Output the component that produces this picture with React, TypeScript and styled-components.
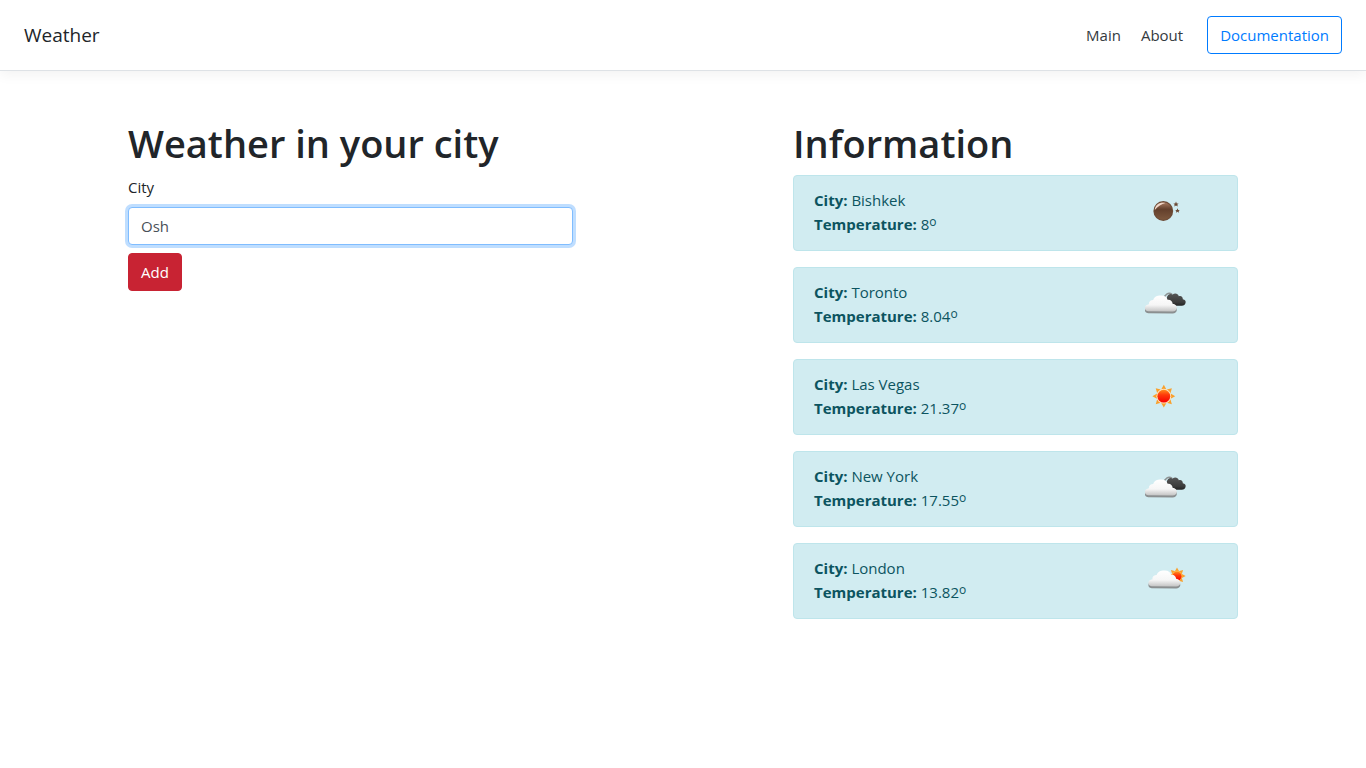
import React, { useState } from 'react';
import styled, { createGlobalStyle } from 'styled-components';

const GlobalStyle = createGlobalStyle`
  *, *::before, *::after { box-sizing: border-box; }
  body {
    margin: 0;
    background: #fff;
    color: #212529;
    font-family: "Segoe UI", "Open Sans", "Noto Sans", sans-serif;
    font-size: 15px;
    font-weight: 400;
    line-height: 24px;
  }
`;

const Header = styled.header`
  display: flex;
  align-items: center;
  padding: 16px 24px;
  margin-bottom: 48px;
  background: #fff;
  border-bottom: 1px solid #dee2e6;
  box-shadow: 0 4px 12px rgba(0, 0, 0, 0.05);
`;

const Brand = styled.span`
  margin-right: auto;
  font-size: 19px;
`;

const Nav = styled.nav`
  display: flex;
  gap: 20px;
  margin-right: 24px;
`;

const NavLink = styled.a`
  color: #343a40;
  text-decoration: none;
`;

const OutlineLink = styled.a`
  padding: 6px 12px;
  border: 1px solid #007bff;
  border-radius: 4px;
  color: #007bff;
  text-decoration: none;
`;

const Container = styled.main`
  display: flex;
  justify-content: space-between;
  max-width: 1140px;
  margin: 0 auto;
`;

const Column = styled.section`
  flex: 0 0 41.6667%;
  padding: 0 15px;
`;

const Title = styled.h1`
  margin: 0 0 8px;
  font-size: 38px;
  font-weight: 600;
  line-height: 48px;
  white-space: nowrap;
`;

const Label = styled.label`
  display: block;
  margin-bottom: 8px;
`;

const Input = styled.input`
  display: block;
  width: 100%;
  height: 38px;
  margin-bottom: 8px;
  padding: 6px 12px;
  border: 1px solid #80bdff;
  border-radius: 4px;
  outline: 0;
  box-shadow: 0 0 0 3px rgba(0, 123, 255, 0.25);
  background: #fff;
  color: #495057;
  font: inherit;
`;

const SubmitButton = styled.button`
  padding: 6px 12px;
  border: 1px solid #c82333;
  border-radius: 4px;
  background: #c82333;
  color: #fff;
  font: inherit;
`;

const Card = styled.article`
  display: flex;
  justify-content: space-between;
  margin-bottom: 16px;
  padding: 12px 47px 12px 20px;
  border: 1px solid #bee5eb;
  border-radius: 4px;
  background: #d1ecf1;
  color: #0c5460;

  svg {
    display: block;
    width: 50px;
    height: 50px;
  }
`;

const Degree = styled.sup`
  font-size: 12px;
  line-height: 0;
  vertical-align: 4px;
`;

type Kind = 'moon' | 'clouds' | 'sun' | 'partly';

const rays = (cx: number, cy: number, inner: number, outer: number, half: number) =>
  Array.from({ length: 8 }, (_, i) => (
    <path
      key={i}
      d={`M${cx - half} ${cy - inner}L${cx} ${cy - outer}L${cx + half} ${cy - inner}Z`}
      fill="#f9a02c"
      transform={`rotate(${i * 45} ${cx} ${cy})`}
    />
  ));

const CLOUD =
  'M8.2 31.3C5.6 31 4.6 29.2 5 27.2C5.4 25.4 7 24.6 8.8 24.2C8.8 21.4 10.8 20 13.2 20C14 16.6 17.6 15.2 21.4 15.4C24.8 15.4 27 17.2 27.6 19.8C30.4 19.4 32.6 21.2 32.6 23.8C35.4 24.2 37 25.8 36.8 28.2C36.6 30.2 35 31.4 32.6 31.4Z';
const DARK =
  'M28.6 25.8C25.8 25.6 24.6 23.6 25.4 21.4L26.8 17.8C27.4 14.8 30 13.2 32.6 14.6C34.8 12.8 38 13.4 38.8 16.2C41.2 15.4 43 17 42.8 19.2C45 19.4 46 21 45.6 22.8C45.2 24.8 43.8 25.8 41.8 25.8Z';
const STAR = 'M0-2.6L.8-.8L2.6-.7L1.3.5L1.8 2.4L0 1.4L-1.8 2.4L-1.3.5L-2.6-.7L-.8-.8Z';

function WeatherIcon({ kind, id }: { kind: Kind; id: string }) {
  const white = `white-${id}`;
  const dark = `dark-${id}`;
  const core = `core-${id}`;
  const moon = `moon-${id}`;
  return (
    <svg viewBox="0 0 50 50" aria-hidden="true">
      <defs>
        <linearGradient id={white} x1="0" y1="0" x2="0" y2="1">
          <stop offset="0" stopColor="#fff" />
          <stop offset="0.6" stopColor="#f6f6f6" />
          <stop offset="1" stopColor="#c4c4c4" />
        </linearGradient>
        <linearGradient id={dark} x1="0" y1="0" x2="0" y2="1">
          <stop offset="0" stopColor="#555" />
          <stop offset="0.7" stopColor="#3c3c3c" />
          <stop offset="1" stopColor="#222" />
        </linearGradient>
        <linearGradient id={core} x1="0" y1="0" x2="0" y2="1">
          <stop offset="0" stopColor="#ff8a1c" />
          <stop offset="0.4" stopColor="#ff3a0a" />
          <stop offset="1" stopColor="#f50000" />
        </linearGradient>
        <linearGradient id={moon} x1="0" y1="0" x2="0" y2="1">
          <stop offset="0" stopColor="#a87a60" />
          <stop offset="0.4" stopColor="#63402c" />
          <stop offset="1" stopColor="#7d583e" />
        </linearGradient>
      </defs>
      {kind === 'moon' && (
        <>
          <circle cx="23.3" cy="23" r="9.9" fill="#6b4a36" />
          <circle cx="23.3" cy="23" r="8.8" fill={`url(#${moon})`} />
          <path d="M14.8 22C15 16.4 20 13.8 25.4 15C21.6 16.2 17.8 18 14.8 22Z" fill="#f0d6c8" />
          <path d={STAR} fill="#6b4a36" transform="translate(36 16.2)" />
          <path d={STAR} fill="#6b4a36" transform="translate(37.5 22.6) scale(.9)" />
        </>
      )}
      {kind === 'sun' && (
        <>
          {rays(23.8, 24.2, 6.8, 11.4, 2.6)}
          <circle cx="23.8" cy="24.2" r="7.4" fill="#ffe1ba" />
          <circle cx="23.8" cy="24.2" r="6.4" fill={`url(#${core})`} />
        </>
      )}
      {kind === 'partly' && (
        <>
          {rays(37, 20, 4.4, 8.6, 2.2)}
          <circle cx="37" cy="20" r="5.4" fill="#ffb347" />
          <circle cx="37" cy="20.3" r="4.5" fill={`url(#${core})`} />
        </>
      )}
      {kind === 'clouds' && (
        <>
          <path d="M24 19C24.2 14.8 28.6 11.6 32 14.4" fill="none" stroke="#8d9293" strokeWidth="1.6" />
          <path d={DARK} fill={`url(#${dark})`} />
        </>
      )}
      {(kind === 'clouds' || kind === 'partly') && (
        <g transform={kind === 'partly' ? 'translate(3.5 -1)' : undefined}>
          <path d={CLOUD} fill="#8b8f90" transform="translate(0 2)" />
          <path d={CLOUD} fill={`url(#${white})`} />
        </g>
      )}
    </svg>
  );
}

const cities: { name: string; temperature: string; kind: Kind }[] = [
  { name: 'Bishkek', temperature: '8', kind: 'moon' },
  { name: 'Toronto', temperature: '8.04', kind: 'clouds' },
  { name: 'Las Vegas', temperature: '21.37', kind: 'sun' },
  { name: 'New York', temperature: '17.55', kind: 'clouds' },
  { name: 'London', temperature: '13.82', kind: 'partly' },
];

export default function App() {
  const [city, setCity] = useState('Osh');
  return (
    <>
      <GlobalStyle />
      <Header>
        <Brand>Weather</Brand>
        <Nav>
          <NavLink href="#main">Main</NavLink>
          <NavLink href="#about">About</NavLink>
        </Nav>
        <OutlineLink href="#documentation">Documentation</OutlineLink>
      </Header>
      <Container>
        <Column>
          <Title>Weather in your city</Title>
          <form onSubmit={(e) => e.preventDefault()}>
            <Label htmlFor="city">City</Label>
            <Input id="city" type="text" value={city} onChange={(e) => setCity(e.target.value)} />
            <SubmitButton type="submit">Add</SubmitButton>
          </form>
        </Column>
        <Column>
          <Title>Information</Title>
          {cities.map((c, i) => (
            <Card key={c.name}>
              <div>
                <b>City:</b> {c.name}
                <br />
                <b>Temperature:</b> {c.temperature}
                <Degree>o</Degree>
              </div>
              <WeatherIcon kind={c.kind} id={String(i)} />
            </Card>
          ))}
        </Column>
      </Container>
    </>
  );
}
